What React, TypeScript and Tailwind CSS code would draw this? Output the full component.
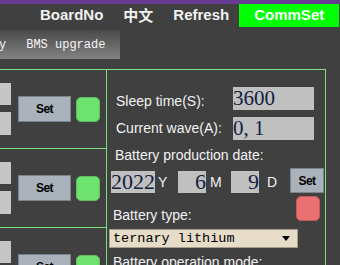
import React from 'react'

const sans = { fontFamily: '"Liberation Sans", Arial, sans-serif' }
const serif = { fontFamily: '"Liberation Serif", "Times New Roman", serif' }
const mono = { fontFamily: '"Liberation Mono", "Courier New", monospace' }

const SetButton = ({ className = '' }: { className?: string }) => (
  <div
    className={`flex items-center justify-center bg-[#a9b1ba] border border-[#7b838c] text-black text-[12px] font-bold tracking-[-0.5px] ${className}`}
    style={sans}
  >
    Set
  </div>
)

const Led = ({ on }: { on: boolean }) => (
  <div
    className={`w-[24px] h-[25px] rounded-[5px] border ${
      on ? 'bg-[#6ee26e] border-[#5fbf5f]' : 'bg-[#e97171] border-[#c05a5a]'
    }`}
  />
)

const LeftCell = () => (
  <div className="h-[79px] border-t border-r border-[#80e080] flex items-center">
    <div className="flex flex-col gap-[7px] w-[11px]">
      <div className="h-[22px] bg-[#c6c6c6]" />
      <div className="h-[23px] bg-[#c6c6c6]" />
    </div>
    <SetButton className="ml-[7px] w-[53px] h-[26px]" />
    <div className="ml-[5px]">
      <Led on />
    </div>
  </div>
)

const Field = ({ value, className = '' }: { value: string; className?: string }) => (
  <div
    className={`bg-[#c0c0c0] text-[#13203f] leading-none flex items-center ${className}`}
    style={serif}
  >
    {value}
  </div>
)

export default function App() {
  return (
    <div className="w-[340px] h-[265px] overflow-hidden bg-[#404040] text-[#f2f2f2]" style={sans}>
      <div className="h-[4px] bg-[#653c92]" />

      {/* top bar */}
      <div className="h-[26px] flex items-start">
        <div className="flex items-center h-[23px] pl-[40px] text-[15px] font-bold">
          <span>BoardNo</span>
          <span className="ml-[20px]" style={{ fontFamily: '"Noto Sans CJK SC", sans-serif' }}>
            中文
          </span>
          <span className="ml-[20px]">Refresh</span>
        </div>
        <div className="ml-[10px] w-[100px] h-[23px] bg-[#00ff00] flex items-center justify-center text-[15px] font-bold text-white">
          CommSet
        </div>
      </div>

      {/* tabs */}
      <div className="h-[29px] flex">
        <div
          className="w-[120px] h-[29px] bg-gradient-to-b from-[#4a4a4a] to-[#838383] flex items-center text-[12px] text-[#f4f4f4]"
          style={mono}
        >
          <span className="-ml-[1px]">y</span>
          <span className="ml-[20px]">BMS upgrade</span>
        </div>
      </div>

      <div className="h-[10px]" />

      <div className="flex">
        <div className="w-[107px] shrink-0">
          <LeftCell />
          <LeftCell />
          <LeftCell />
        </div>

        <div className="w-[219px] h-[200px] border-t border-r border-[#80e080] text-[14px]">
          <div className="mt-[17px] ml-[9px] flex items-center">
            <span className="w-[117px] translate-y-[3px]">Sleep time(S):</span>
            <Field value="3600" className="w-[81px] h-[23px] text-[21px]" />
          </div>
          <div className="mt-[7px] ml-[9px] flex items-center">
            <span className="w-[117px]">Current wave(A):</span>
            <Field value="0, 1" className="w-[81px] h-[23px] text-[21px]" />
          </div>

          <div className="mt-[7px] flex">
            <div className="flex flex-col w-[183px]">
              <span className="ml-[8px] leading-[16px]">Battery production date:</span>
              <div className="mt-[8px] ml-[4px] flex items-center h-[22px]">
                <Field value="2022" className="w-[44px] h-[22px] text-[22px]" />
                <span className="ml-[3px] w-[20px]">Y</span>
                <Field value="6" className="w-[28px] h-[22px] text-[22px] justify-end" />
                <span className="ml-[4px] w-[21px]">M</span>
                <Field value="9" className="w-[28px] h-[22px] text-[22px] justify-end" />
                <span className="ml-[8px]">D</span>
              </div>
              <span className="mt-[14px] ml-[6px] leading-[16px]">Battery type:</span>
            </div>
            <div className="flex flex-col">
              <SetButton className="mt-[21px] w-[34px] h-[25px]" />
              <div className="mt-[3px] ml-[6px]">
                <Led on={false} />
              </div>
            </div>
          </div>

          <div className="mt-[6px] ml-[2px] w-[189px] h-[19px] bg-[#e6dcc8] border border-[#a59c8c] flex items-center justify-between pl-[3px] pr-[7px]">
            <span className="text-[13.5px] text-black leading-none" style={mono}>
              ternary lithium
            </span>
            <svg width="8" height="5" viewBox="0 0 8 5">
              <path d="M0 0H8L4 5Z" fill="#000" />
            </svg>
          </div>

          <div className="mt-[6px] ml-[6px] leading-[16px]">Battery operation mode:</div>
        </div>
      </div>
    </div>
  )
}
